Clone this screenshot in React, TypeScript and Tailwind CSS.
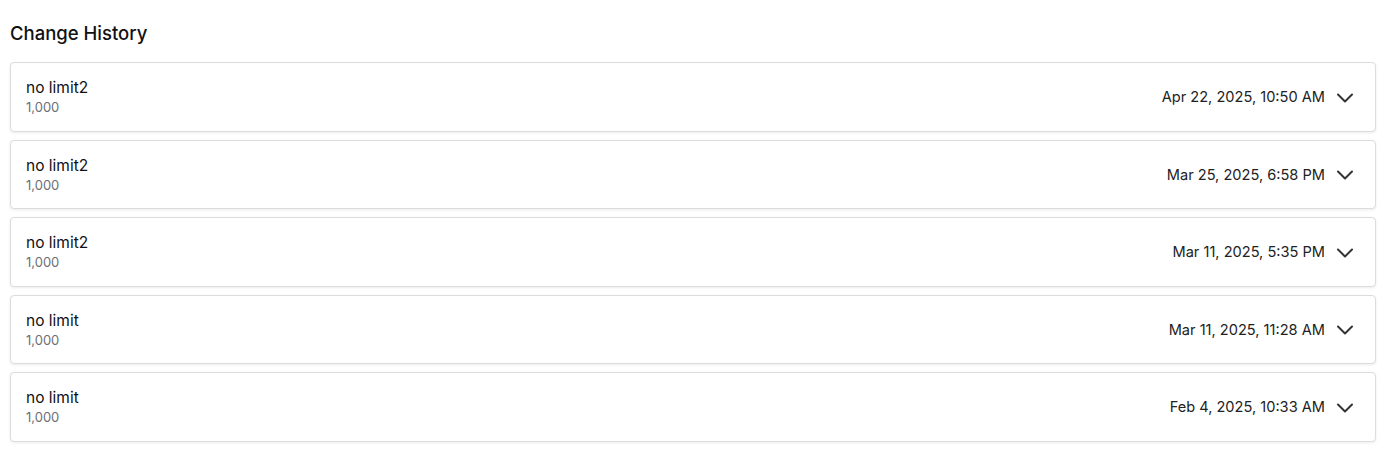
import { ChevronDown } from "lucide-react";

const entries = [
  { name: "no limit2", value: "1,000", date: "Apr 22, 2025, 10:50 AM" },
  { name: "no limit2", value: "1,000", date: "Mar 25, 2025, 6:58 PM" },
  { name: "no limit2", value: "1,000", date: "Mar 11, 2025, 5:35 PM" },
  { name: "no limit", value: "1,000", date: "Mar 11, 2025, 11:28 AM" },
  { name: "no limit", value: "1,000", date: "Feb 4, 2025, 10:33 AM" },
];

function HistoryRow({ name, value, date }: { name: string; value: string; date: string }) {
  return (
    <div className="flex h-[69.5px] items-center justify-between rounded-[4px] border border-[#dcdcdc] bg-white pl-[15px] pr-[16px] shadow-[0_1px_3px_rgba(0,0,0,0.08)]">
      <div className="flex flex-col pt-[1px]">
        <span className="text-[15.5px] leading-[20px] text-[#111]">{name}</span>
        <span className="text-[13px] leading-[18px] text-[#6b6f76]">{value}</span>
      </div>
      <div className="flex items-center gap-[6px] pt-[2px]">
        <span className="pt-[1px] text-[14.6px] text-[#222]">{date}</span>
        <ChevronDown size={28} strokeWidth={1.7} className="text-[#333]" />
      </div>
    </div>
  );
}

export default function App() {
  return (
    <div
      className="min-h-[454px] bg-white pl-[10px] pt-[21px]"
      style={{ fontFamily: 'Inter, "Open Sans", sans-serif' }}
    >
      <h2 className="mb-[17px] text-[18.5px] font-medium leading-[24px] text-[#111]">Change History</h2>
      <div className="flex w-[1366px] flex-col gap-[8px]">
        {entries.map((e, i) => (
          <HistoryRow key={i} {...e} />
        ))}
      </div>
    </div>
  );
}
